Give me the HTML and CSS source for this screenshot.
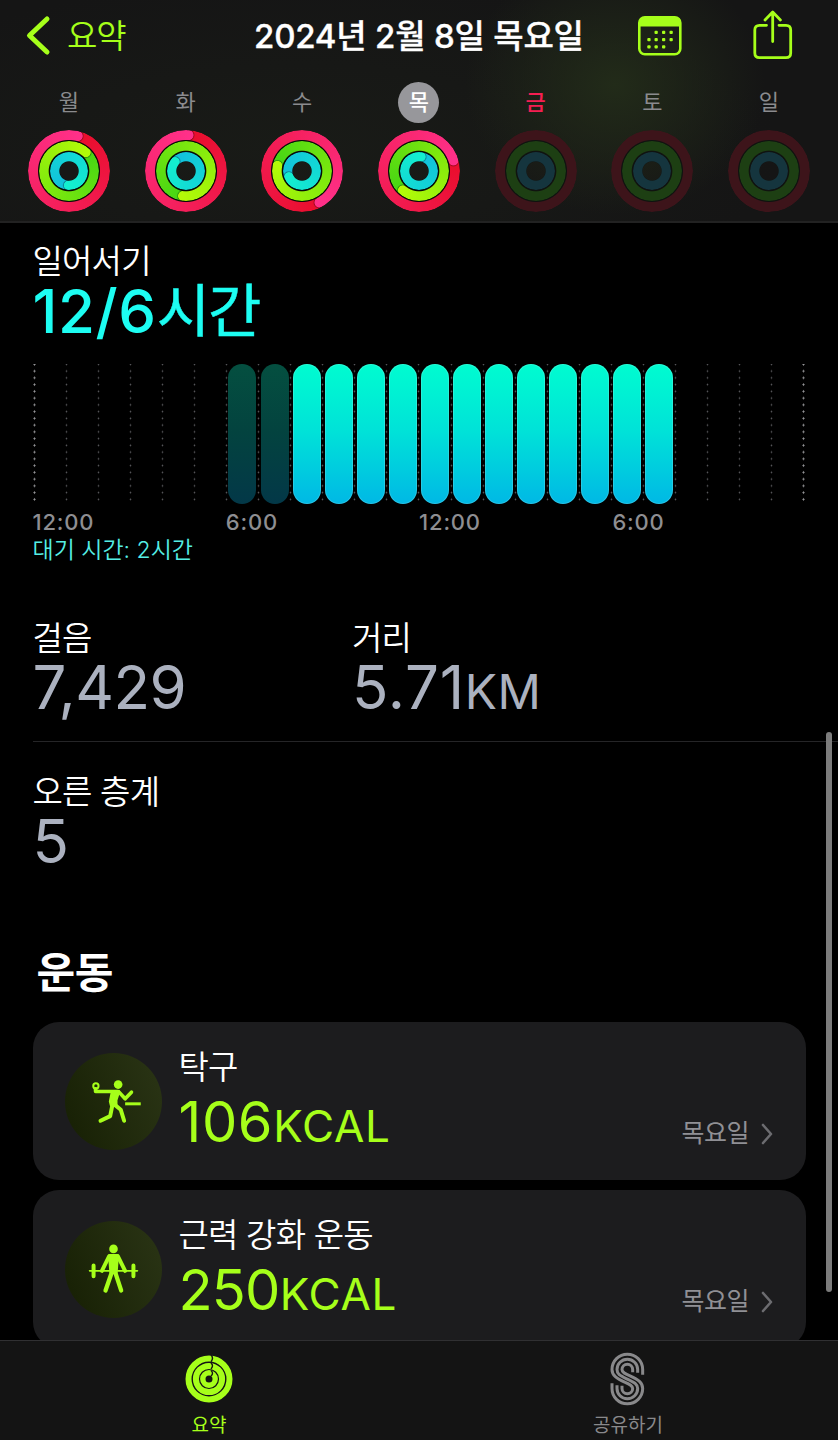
FILE: index.html
```
<!DOCTYPE html>
<html lang="ko">
<head>
<meta charset="utf-8">
<title>피트니스</title>
<link rel="stylesheet" href="styles.css">
</head>
<body>
<div class="app">
  <header class="header">
    <nav class="navbar">
      <svg class="chevron" viewBox="0 0 26 42"><path d="M22 4 L4.500 20.500 L22 37"/></svg>
      <span class="back">요약</span>
      <h1 class="title">2024년 2월 8일 목요일</h1>
      <svg class="calendar" viewBox="0 0 44 40">
        <rect x="1.300" y="1.300" width="41" height="37" rx="5.500" fill="none" stroke="#a6ff1a" stroke-width="2.600"/>
        <path d="M1 10.500V7Q1 1 7 1H37Q43 1 43 7V10.500Z" fill="#a6ff1a"/>
        <g fill="#a6ff1a">
          <rect x="16.500" y="14.800" width="3.300" height="3.300" rx="1"/><rect x="24" y="14.800" width="3.300" height="3.300" rx="1"/><rect x="31.500" y="14.800" width="3.300" height="3.300" rx="1"/>
          <rect x="9.300" y="22" width="3.300" height="3.300" rx="1"/><rect x="16.500" y="22" width="3.300" height="3.300" rx="1"/><rect x="24" y="22" width="3.300" height="3.300" rx="1"/><rect x="31.500" y="22" width="3.300" height="3.300" rx="1"/>
          <rect x="9.300" y="29.200" width="3.300" height="3.300" rx="1"/><rect x="16.500" y="29.200" width="3.300" height="3.300" rx="1"/><rect x="24" y="29.200" width="3.300" height="3.300" rx="1"/>
        </g>
      </svg>
      <svg class="share" viewBox="0 0 40 50"><path d="M13.500 15.300H6.500Q1.800 15.300 1.800 20V43Q1.800 47.700 6.500 47.700H33Q37.700 47.700 37.700 43V20Q37.700 15.300 33 15.300H26M19.700 31.500V3M12 10L19.700 2L27.400 10"/></svg>
    </nav>
    <div class="week">
      <div class="day"><span class="dow">월</span><div class="rings"><i class="ring move" style="--end:14deg"></i><i class="ring exercise" style="--end:42deg"></i><i class="ring stand" style="--end:182deg"></i></div></div>
      <div class="day"><span class="dow">화</span><div class="rings"><i class="ring move" style="--end:4deg"></i><i class="ring exercise" style="--end:187deg"></i><i class="ring stand" style="--end:310deg"></i></div></div>
      <div class="day"><span class="dow">수</span><div class="rings"><i class="ring move" style="--end:151deg"></i><i class="ring exercise" style="--end:282deg"></i><i class="ring stand" style="--end:246deg"></i></div></div>
      <div class="day"><span class="dow selected">목</span><div class="rings"><i class="ring move" style="--end:73deg"></i><i class="ring exercise" style="--end:220deg"></i><i class="ring stand" style="--end:8deg"></i></div></div>
      <div class="day"><span class="dow today">금</span><div class="rings empty"><i class="ring move"></i><i class="ring exercise"></i><i class="ring stand"></i></div></div>
      <div class="day"><span class="dow">토</span><div class="rings empty"><i class="ring move"></i><i class="ring exercise"></i><i class="ring stand"></i></div></div>
      <div class="day"><span class="dow">일</span><div class="rings empty"><i class="ring move"></i><i class="ring exercise"></i><i class="ring stand"></i></div></div>
    </div>
  </header>

  <main class="content">
    <section class="stand-section">
      <h2 class="label">일어서기</h2>
      <p class="stand-value"><span class="num">12/6</span><span class="unit-ko">시간</span></p>
      <div class="chart">
        <i class="hour major"></i><i class="hour"></i><i class="hour"></i><i class="hour"></i><i class="hour"></i><i class="hour"></i>
        <i class="hour"><b class="bar idle"></b></i><i class="hour"><b class="bar idle"></b></i>
        <i class="hour"><b class="bar"></b></i><i class="hour"><b class="bar"></b></i><i class="hour"><b class="bar"></b></i><i class="hour"><b class="bar"></b></i>
        <i class="hour"><b class="bar"></b></i><i class="hour"><b class="bar"></b></i><i class="hour"><b class="bar"></b></i><i class="hour"><b class="bar"></b></i>
        <i class="hour"><b class="bar"></b></i><i class="hour"><b class="bar"></b></i><i class="hour"><b class="bar"></b></i><i class="hour"><b class="bar"></b></i>
        <i class="hour"></i><i class="hour"></i><i class="hour"></i><i class="hour"></i><i class="hour major"></i>
      </div>
      <div class="axis"><span>12:00</span><span>6:00</span><span>12:00</span><span>6:00</span></div>
      <p class="idle-note">대기 시간: 2시간</p>
    </section>

    <section class="stats">
      <div><h2 class="label">걸음</h2><p class="stat">7,429</p></div>
      <div><h2 class="label">거리</h2><p class="stat distance">5.71<small>KM</small></p></div>
    </section>
    <section class="floors">
      <h2 class="label">오른 층계</h2><p class="stat">5</p>
    </section>

    <h2 class="heading">운동</h2>
    <article class="card">
      <svg class="badge" viewBox="0 0 292 292">
        <defs><linearGradient id="badge" x1="0" y1=".7" x2="1" y2=".3"><stop offset="0" stop-color="#182105"/><stop offset="1" stop-color="#293314"/></linearGradient></defs>
        <circle cx="146" cy="146" r="146" fill="url(#badge)"/>
        <g fill="none" stroke="#a6ff1a" stroke-linecap="round" stroke-linejoin="round">
          <circle cx="93" cy="99" r="8" stroke-width="6"/>
          <path d="M92 108V116H160" stroke-width="11"/>
          <path d="M162 117L181 138L200 118" stroke-width="11"/>
          <path d="M142 116H162L154 142V158L139 158L136 146Z" fill="#a6ff1a" stroke-width="8"/>
          <path d="M142 160L136 190L107 204M151 157L168 171L178 204" stroke-width="12"/>
          <path d="M181 153H228" stroke-width="9" stroke-linecap="butt"/>
        </g>
        <circle cx="160" cy="95" r="13" fill="#a6ff1a"/>
      </svg>
      <div class="info"><h3>탁구</h3><p class="kcal"><span>106</span><small>KCAL</small></p></div>
      <span class="when">목요일</span>
      <svg class="more" viewBox="0 0 12 22"><path d="M2 2L10 11L2 20"/></svg>
    </article>
    <article class="card">
      <svg class="badge" viewBox="0 0 292 292">
        <circle cx="146" cy="146" r="146" fill="url(#badge)"/>
        <g fill="none" stroke="#a6ff1a" stroke-linecap="round" stroke-linejoin="round">
          <path d="M74 150H218" stroke-width="5"/>
          <path d="M86 134V166M206 134V166" stroke-width="12"/>
          <path d="M133 106L111 150M159 106L181 150" stroke-width="12"/>
          <path d="M134 104H158L154 155H138Z" fill="#a6ff1a" stroke-width="9"/>
          <path d="M140 157L122 209M152 157L169 209" stroke-width="13"/>
        </g>
        <circle cx="146" cy="84" r="13" fill="#a6ff1a"/>
      </svg>
      <div class="info"><h3>근력 강화 운동</h3><p class="kcal second"><span>250</span><small>KCAL</small></p></div>
      <span class="when">목요일</span>
      <svg class="more" viewBox="0 0 12 22"><path d="M2 2L10 11L2 20"/></svg>
    </article>
  </main>

  <i class="scroll-thumb"></i>

  <footer class="tabbar">
    <div class="tab active">
      <svg class="tab-icon" viewBox="0 0 50 56">
        <g fill="none" stroke="#a6ff1a" stroke-width="6">
          <circle cx="25" cy="28" r="20.500"/><circle cx="25" cy="28" r="13.100"/><circle cx="25" cy="28" r="6.200" stroke-width="5.400"/>
        </g>
        <path d="M27 4Q30 7 27 10.700M27 12Q30 14.700 27 18M27 19.500Q30 22 27 25" fill="none" stroke="#141414" stroke-width="1.400"/>
      </svg>
      <span>요약</span>
    </div>
    <div class="tab">
      <svg class="tab-icon" viewBox="99 47.500 150 168">
        <g fill="none" stroke="#89898b" stroke-width="9">
          <path d="M218 119V103A46 46 0 0 0 126 103C126 121 140 130 164 141C180 148 188 152 188 160A16 16 0 0 1 156 160V152"/>
          <path d="M203 113V103A31 31 0 0 0 141 103C141 117 150 121 172 132C195 143 203 148 203 160A31 31 0 0 1 141 160V150"/>
          <path d="M188 111V103A16 16 0 0 0 156 103C156 112 165 116 180 122C205 133 218 142 218 160A46 46 0 0 1 126 160V144"/>
        </g>
      </svg>
      <span>공유하기</span>
    </div>
  </footer>
</div>
</body>
</html>
```
FILE: styles.css
```
* { box-sizing: border-box; margin: 0; padding: 0; }
body { background: #000; }
.app {
  position: relative;
  display: flex;
  flex-direction: column;
  width: 838px;
  height: 1440px;
  overflow: hidden;
  color: #fff;
  font-family: Inter, "Noto Sans CJK KR", sans-serif;
}
h1, h2, h3 { font-weight: 400; }
p, h1, h2, h3, span { white-space: nowrap; }

/* Header */
.header {
  flex: none;
  height: 223px;
  border-bottom: 2px solid #222;
  background:
    radial-gradient(ellipse 150px 130px at 615px 85px, #222b19 0%, rgba(34, 43, 25, 0) 100%),
    radial-gradient(ellipse 480px 170px at 300px 150px, #191b17, rgba(25, 27, 23, 0)),
    #151515;
}
.navbar { display: flex; align-items: center; height: 72px; padding-left: 25px; }
.chevron { width: 26px; height: 42px; margin-bottom: 1px; fill: none; stroke: #a6ff1a; stroke-width: 5; stroke-linecap: round; stroke-linejoin: round; }
.back { width: 187px; padding-left: 16px; color: #a6ff1a; font-size: 33px; line-height: 72px; letter-spacing: -1px; font-weight: 350; }
.title { width: 400px; padding-left: 16px; font-size: 33px; font-weight: 500; line-height: 72px; letter-spacing: -.2px; -webkit-text-stroke: .35px #fff; }
.calendar { width: 44px; height: 40px; }
.share { width: 40px; height: 50px; margin-left: 71px; margin-bottom: 2px; fill: none; stroke: #a6ff1a; stroke-width: 2.8; stroke-linecap: round; stroke-linejoin: round; }

.week { display: grid; grid-template-columns: repeat(7, 116.7px); padding: 10px 0 0 10.5px; }
.day { display: flex; flex-direction: column; align-items: center; gap: 7px; }
.dow { width: 41px; height: 41px; border-radius: 50%; color: #8b8b8e; font-size: 22px; line-height: 40px; text-align: center; }
.dow.selected { background: #97979b; color: #fff; font-weight: 500; }
.dow.today { color: #f51e52; font-weight: 500; }

.rings { display: grid; place-items: center; width: 82px; height: 82px; border-radius: 50%; background: radial-gradient(circle, transparent 9px, #080b08 10px, #080b08 39px, transparent 40px); }
.ring {
  position: relative;
  grid-area: 1 / 1;
  width: var(--d);
  height: var(--d);
  border-radius: 50%;
  background: conic-gradient(from var(--end, 0deg), var(--from), var(--to));
  -webkit-mask: radial-gradient(circle closest-side, transparent calc(100% - var(--w) - .5px), #000 calc(100% - var(--w) + .5px));
  mask: radial-gradient(circle closest-side, transparent calc(100% - var(--w) - .5px), #000 calc(100% - var(--w) + .5px));
}
/* Rounded cap, visible only ahead of the progress end */
.ring::before {
  content: "";
  position: absolute;
  inset: 0;
  transform: rotate(var(--end));
  clip-path: inset(0 0 50% calc(50% - .5px));
  background: radial-gradient(circle at 50% calc(var(--w) / 2), var(--to) calc(var(--w) / 2 - .4px), rgba(0, 0, 0, .3) calc(var(--w) / 2 + .3px), transparent calc(var(--w) / 2 + 1.5px));
}
.move { --d: 82px; --w: 10px; --from: #e90d2b; --to: #ff3089; }
.exercise { --d: 60px; --w: 9.7px; --from: #45d514; --to: #b3fa08; }
.stand { --d: 38px; --w: 9.3px; --from: #12bedc; --to: #13efcf; }
.empty { background: radial-gradient(circle, transparent 9px, #101310 10px, #101310 39px, transparent 40px); }
.empty .ring::before { display: none; }
.empty .move { --from: #3d141a; --to: #3d141a; }
.empty .exercise { --from: #1d3f13; --to: #1d3f13; }
.empty .stand { --from: #15353e; --to: #15353e; }

/* Content */
.content { flex: 1; min-height: 0; overflow: hidden; padding: 16px 33px 0 32.5px; }
.label { height: 44px; font-size: 33px; line-height: 44px; font-weight: 350; letter-spacing: -.8px; }
.stand-section { height: 362px; }
.stand-value { display: flex; height: 54px; color: #1dfdf2; line-height: 56px; }
.stand-value .num { font-size: 60px; font-weight: 450; letter-spacing: .6px; }
.unit-ko { font-size: 58px; letter-spacing: -2px; font-weight: 400; -webkit-text-stroke: .5px #1dfdf2; }
.chart { display: grid; grid-template-columns: repeat(25, 32.08px); height: 140px; margin-top: 27px; }
.hour { padding-left: 3.5px; background: radial-gradient(circle, #5c5c60 .7px, transparent 1.1px) 0 -3px / 3px 6.75px repeat-y; }
.major { background-image: radial-gradient(circle, #98989b .8px, transparent 1.3px); }
.bar { display: block; width: 28px; height: 140px; border-radius: 14px; background: linear-gradient(#00fcd0, #00e2d8 48%, #00b8e5); box-shadow: inset 0 0 0 1px rgba(255, 255, 255, .15); }
.idle { background: linear-gradient(#044f40, #03433f 48%, #033848); box-shadow: none; }
.axis { display: grid; grid-template-columns: repeat(4, 193.3px); height: 33px; padding-top: 4px; color: #8e8e92; font-size: 22px; font-weight: 500; line-height: 29px; letter-spacing: .8px; }
.idle-note { color: #55eee5; font-size: 23px; line-height: 27px; font-weight: 350; }

.stats { display: grid; grid-template-columns: 319.500px 1fr; height: 141px; margin-right: -33px; padding-top: 15px; border-bottom: 1px solid #252527; }
.stat { color: #abb1bf; font-size: 60px; font-weight: 420; line-height: 55px; letter-spacing: -.5px; }
.distance { letter-spacing: .8px; }
.stat small { font-size: 48px; letter-spacing: .3px; }
.floors { padding-top: 28px; height: 204px; }
.heading { height: 54px; padding-left: 4px; font-size: 42px; font-weight: 700; line-height: 54px; letter-spacing: -.5px; }
.card { display: flex; align-items: center; width: 773px; height: 158px; margin-bottom: 10px; padding: 0 32px; border-radius: 26px; background: #1c1c1e; }
.heading + .card { margin-top: 22px; }
.badge { width: 97px; height: 97px; }
.info { width: 520px; height: 158px; padding: 23px 0 0 17px; }
.info h3 { height: 44px; font-size: 33px; font-weight: 350; line-height: 44px; letter-spacing: -.8px; }
.kcal { color: #a6ff1a; font-size: 56px; font-weight: 370; line-height: 67px; }
.kcal span { letter-spacing: .6px; }
.kcal small { font-size: 44px; letter-spacing: .7px; }
.kcal.second span { letter-spacing: -.8px; }
.when { width: 79px; margin-top: 64px; color: #909095; font-size: 25px; line-height: 36px; letter-spacing: -.5px; }
.more { width: 12px; height: 22px; margin-top: 65px; fill: none; stroke: #6c6c70; stroke-width: 2.6; stroke-linecap: round; stroke-linejoin: round; }

.scroll-thumb { position: absolute; left: 826px; top: 732px; width: 6px; height: 560px; border-radius: 3px; background: #7c7c7c; }

/* Tab bar */
.tabbar { flex: none; display: grid; grid-template-columns: 1fr 1fr; height: 100px; border-top: 1px solid #303032; background: #141414; }
.tab { display: flex; flex-direction: column; align-items: center; padding-top: 10px; margin-right: 1px; color: #89898b; font-size: 19px; line-height: 37px; }
.tab.active { color: #a6ff1a; }
.tab-icon { width: 50px; height: 56px; }
```
